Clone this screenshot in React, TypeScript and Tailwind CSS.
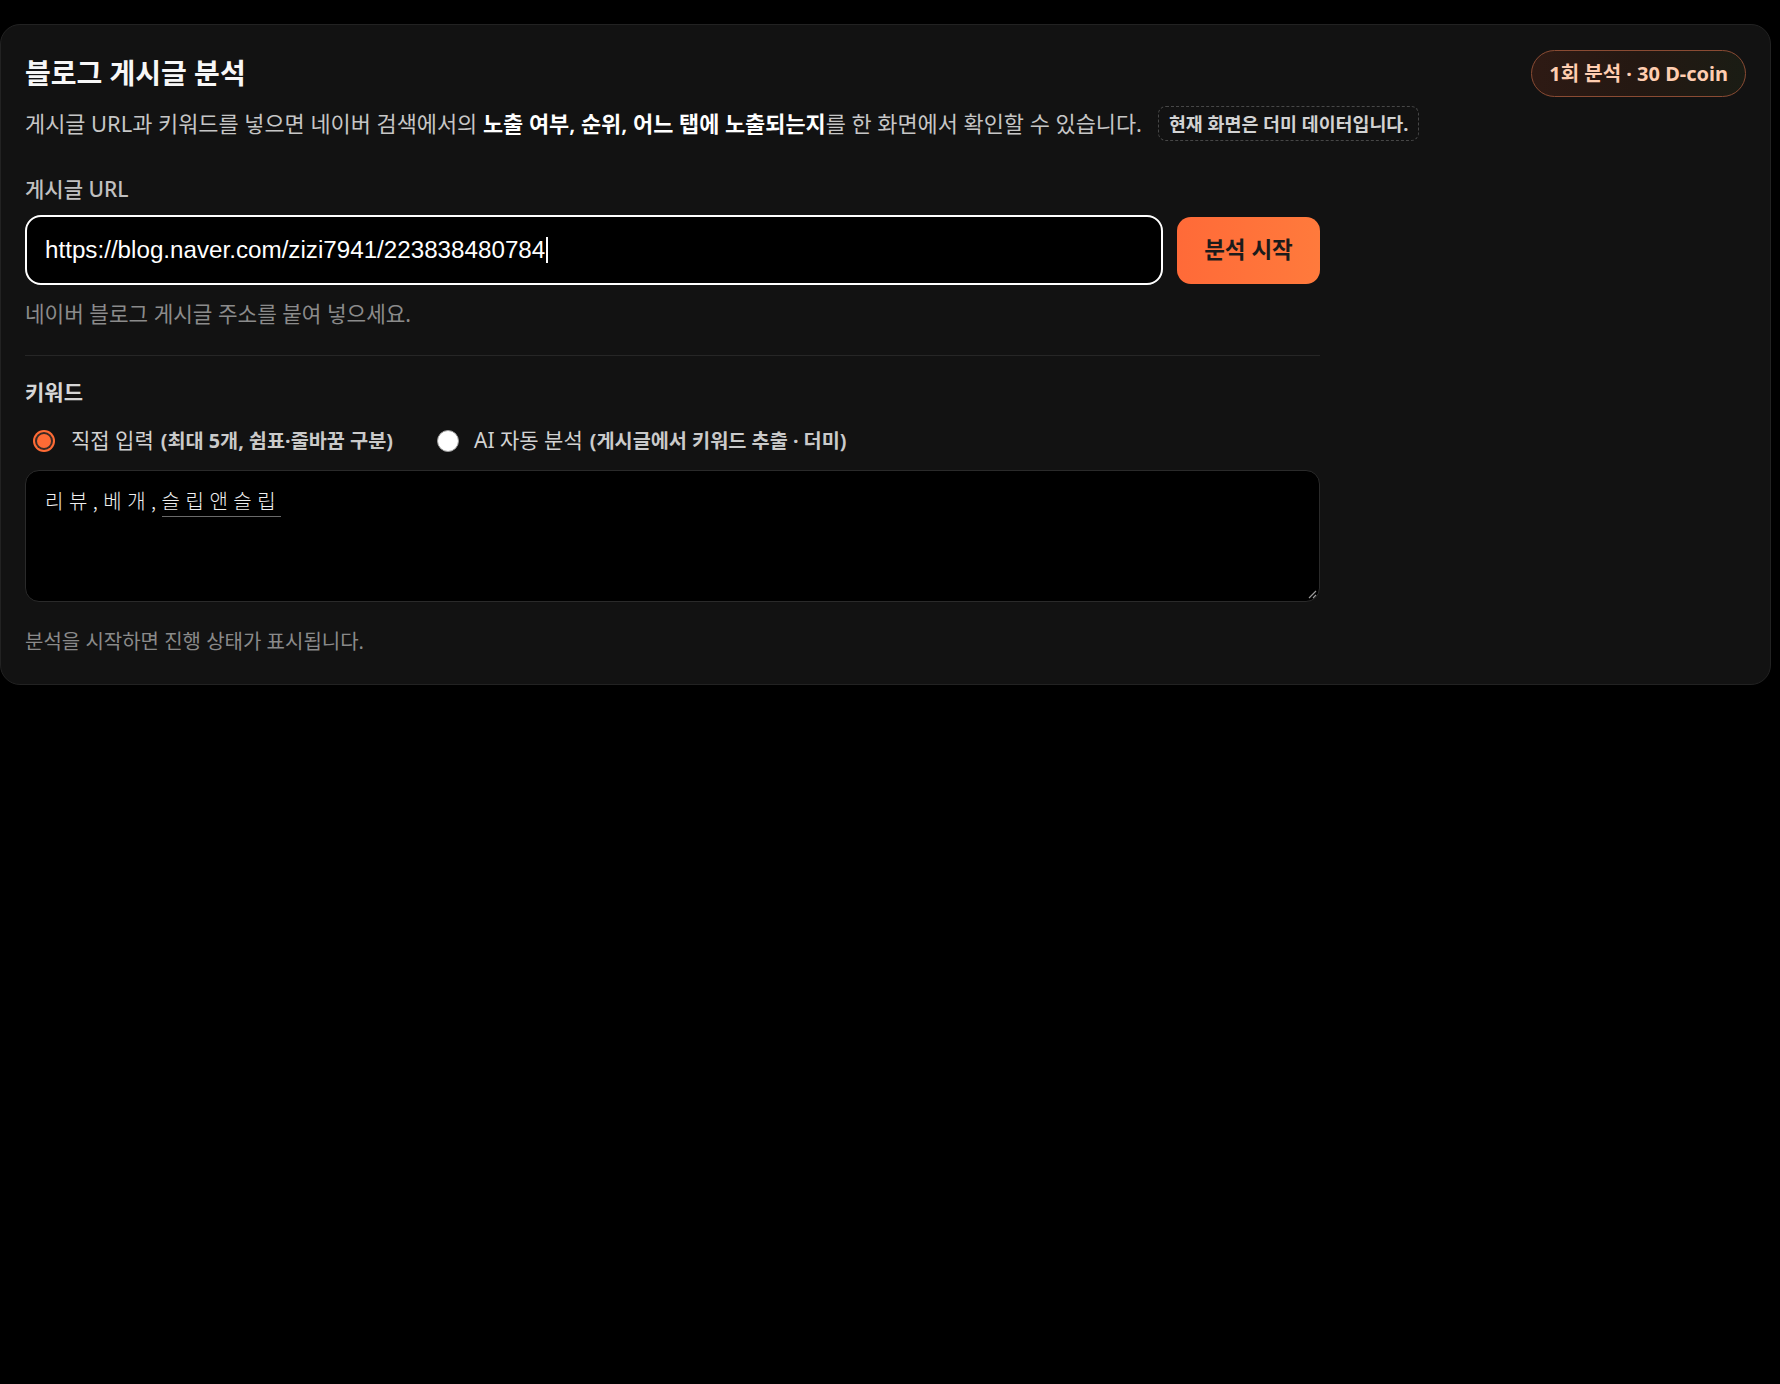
import React from "react";

const KR = '"Noto Sans", "Noto Sans CJK KR", sans-serif';

function Radio({ checked }: { checked: boolean }) {
  if (checked) {
    return (
      <span className="flex h-[22px] w-[22px] shrink-0 items-center justify-center rounded-full bg-[#ff6b35] p-[2px]">
        <span className="flex h-full w-full items-center justify-center rounded-full bg-[#3a2a24] p-[2px]">
          <span className="h-full w-full rounded-full bg-[#ff6b35]" />
        </span>
      </span>
    );
  }
  return <span className="h-[22px] w-[22px] shrink-0 rounded-full border border-[#9a9a9a] bg-white" />;
}

export default function App() {
  return (
    <div className="min-h-screen bg-black pt-6" style={{ fontFamily: KR }}>
      <div className="w-[1771px] rounded-[20px] border border-[#222222] bg-[#121212] pb-[29px] pl-6 pr-6 pt-[28px]">
        <div className="flex items-start justify-between">
          <div>
            <h1 className="text-[28px] font-bold leading-[40px] text-[#f7f7f7]">블로그 게시글 분석</h1>
            <div className="mt-[13px] flex items-center gap-4">
              <p className="text-[21.9px] leading-[28px] text-[#c6c6c6]">
                게시글 URL과 키워드를 넣으면 네이버 검색에서의{" "}
                <span className="font-semibold text-white">노출 여부, 순위, 어느 탭에 노출되는지</span>를 한 화면에서
                확인할 수 있습니다.
              </p>
              <span className="flex h-[35px] items-center rounded-[8px] border border-dashed border-[#474747] px-[10px] text-[18.4px] font-bold text-[#d2d2d2]">
                현재 화면은 더미 데이터입니다.
              </span>
            </div>
          </div>
          <div className="-mt-[3px] flex h-[47px] items-center rounded-full border border-[#8a4b33] bg-gradient-to-r from-[#2e1a14] via-[#241812] to-[#1a1c14] px-[17px] text-[20px] font-bold text-[#ffcdb0]">
            1회 분석 · 30 D-coin
          </div>
        </div>

        <div className="w-[1295px]">
          <div className="mt-[34px] text-[21px] font-medium leading-[28px] text-[#c0c0c0]">게시글 URL</div>
          <div className="mt-3 flex items-center gap-[14px]">
            <div className="flex h-[70px] flex-1 items-center rounded-[16px] border-2 border-white bg-black px-[18px]">
              <span
                className="text-[24.2px] text-white"
                style={{ fontFamily: '"Liberation Sans", Arial, sans-serif' }}
              >
                https://blog.naver.com/zizi7941/223838480784
              </span>
              <span className="ml-[1px] h-[26px] w-[2px] bg-white" />
            </div>
            <button className="h-[67px] w-[143px] rounded-[14px] bg-gradient-to-r from-[#ff6a38] to-[#ff7a3c] text-[22.5px] font-bold text-[#1b1b1b]">
              분석 시작
            </button>
          </div>
          <div className="mt-[15px] text-[21.3px] leading-[28px] text-[#8b8b8b]">네이버 블로그 게시글 주소를 붙여 넣으세요.</div>

          <div className="mt-[27px] h-px bg-[#262626]" />

          <div className="mt-[22px] text-[21px] font-bold leading-[28px] text-[#d6d6d6]">키워드</div>

          <div className="mt-[20px] flex h-[30px] items-center">
            <div className="ml-2 flex items-center">
              <Radio checked />
              <span className="ml-4 text-[21px] text-[#d2d2d2]">직접 입력</span>
              <span className="ml-[7px] text-[19.7px] font-bold text-[#cacaca]">(최대 5개, 쉼표·줄바꿈 구분)</span>
            </div>
            <div className="ml-[44px] flex items-center">
              <Radio checked={false} />
              <span className="ml-[15px] text-[21px] text-[#d2d2d2]">AI 자동 분석</span>
              <span className="ml-[7px] text-[19.7px] font-bold text-[#cacaca]">(게시글에서 키워드 추출 · 더미)</span>
            </div>
          </div>

          <div className="relative mt-[14px] h-[132px] rounded-[14px] border border-[#2a2a2a] bg-black px-[19px] pt-[14px]">
            <div
              className="text-[20px] leading-[32px] tracking-[5.5px] text-[#f0f0f0]"
              style={{ fontFamily: '"Noto Sans CJK KR", sans-serif', fontWeight: 300 }}
            >
              리뷰,베개,<span className="border-b border-[#6a6a6a] pb-[1px]">슬립앤슬립</span>
            </div>
            <svg className="absolute bottom-[2px] right-[2px]" width="10" height="10" viewBox="0 0 10 10">
              <path d="M9 2 L2 9 M9 6 L6 9" stroke="#9a9a9a" strokeWidth="1.2" />
            </svg>
          </div>

          <div className="mt-[27px] text-[20px] leading-[26px] text-[#8a8a8a]">분석을 시작하면 진행 상태가 표시됩니다.</div>
        </div>
      </div>
    </div>
  );
}
